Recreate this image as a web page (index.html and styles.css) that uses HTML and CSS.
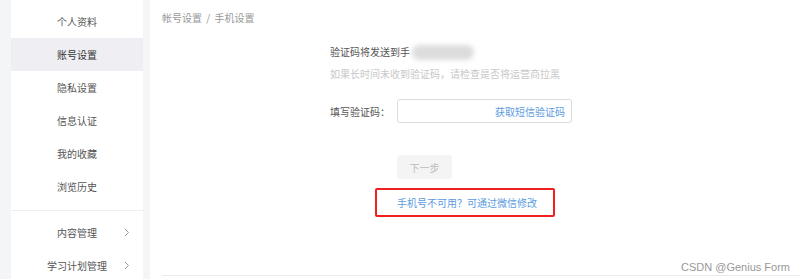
FILE: index.html
```html
<!DOCTYPE html>
<html lang="zh">
<head>
<meta charset="utf-8">
<link rel="stylesheet" href="styles.css">
</head>
<body>
<div class="page">
  <aside class="sidebar">
    <div class="group">
      <div class="item">个人资料</div>
      <div class="item active">账号设置</div>
      <div class="item">隐私设置</div>
      <div class="item">信息认证</div>
      <div class="item">我的收藏</div>
      <div class="item">浏览历史</div>
    </div>
    <div class="group group2">
      <div class="item sub"><span>内容管理</span><svg class="chev" width="6" height="9" viewBox="0 0 6 9"><path d="M1 1 L4.5 4.5 L1 8" fill="none" stroke="#9a9a9a" stroke-width="1"/></svg></div>
      <div class="item sub"><span>学习计划管理</span><svg class="chev" width="6" height="9" viewBox="0 0 6 9"><path d="M1 1 L4.5 4.5 L1 8" fill="none" stroke="#9a9a9a" stroke-width="1"/></svg></div>
    </div>
  </aside>
  <main class="main">
    <div class="crumb">帐号设置 <span class="sep">/</span> 手机设置</div>
    <div class="form">
      <div class="send">验证码将发送到手<span class="blur"></span></div>
      <div class="hint">如果长时间未收到验证码，请检查是否将运营商拉黑</div>
      <div class="row">
        <span class="label">填写验证码：</span>
        <div class="input"><span class="get">获取短信验证码</span></div>
      </div>
      <div class="btn-row"><button class="next">下一步</button></div>
      <div class="alt"><span class="alt-link">手机号不可用？可通过微信修改</span></div>
    </div>
    <div class="bottom"></div>
    <div class="mark">CSDN @Genius Form</div>
  </main>
</div>
</body>
</html>
```

FILE: styles.css
```css
* { box-sizing: border-box; }
html, body {
  margin: 0;
  padding: 0;
  height: 279px;
  overflow: hidden;
  background: #f4f5f7;
  font-family: "Noto Sans CJK SC", "Microsoft YaHei", sans-serif;
  font-size: 10px;
}
.page {
  display: flex;
  padding-left: 11px;
  height: 279px;
}
.sidebar {
  width: 132px;
  background: #fff;
  margin-right: 7px;
  flex: none;
}
.group {
  padding-top: 5px;
  padding-bottom: 7px;
  border-bottom: 1px solid #eeeff1;
}
.group2 {
  padding-top: 5px;
  border-bottom: none;
}
.item {
  height: 33px;
  line-height: 33px;
  text-align: center;
  color: #555;
  font-size: 10px;
}
.item.active { background: #efeff3; color: #333; }
.item.sub {
  display: flex;
  align-items: center;
  justify-content: center;
  position: relative;
}
.chev { position: absolute; right: 13px; top: 12px; }
.main {
  flex: 1;
  background: #fff;
  position: relative;
  padding: 0 0 0 12px;
}
.crumb {
  height: 36px;
  line-height: 36px;
  color: #999;
  font-size: 10px;
}
.crumb .sep { margin: 0 2px; }
.form {
  margin-left: 168px;
}
.send {
  height: 20px;
  line-height: 20px;
  margin-top: 6px;
  color: #555;
  display: flex;
  align-items: center;
}
.blur {
  display: inline-block;
  width: 62px;
  height: 15px;
  background: #dcdcdc;
  border-radius: 8px;
  filter: blur(2.5px);
  margin-left: 2px;
}
.hint {
  margin-top: 2px;
  height: 20px;
  line-height: 20px;
  color: #c8c8c8;
  font-size: 10px;
}
.row {
  display: flex;
  align-items: center;
  margin-top: 15px;
}
.label {
  width: 67px;
  color: #555;
}
.input {
  width: 175px;
  height: 24px;
  border: 1px solid #dcdcdc;
  border-radius: 3px;
  display: flex;
  align-items: center;
  justify-content: flex-end;
  padding-right: 6px;
}
.get { color: #5b9be0; }
.btn-row {
  margin-top: 32px;
  padding-left: 67px;
}
.next {
  width: 55px;
  height: 24px;
  background: #f4f4f4;
  border: none;
  border-radius: 3px;
  color: #bbb;
  font-family: inherit;
  font-size: 10px;
  padding: 0;
  display: block;
}
.alt {
  margin-top: 9px;
  margin-left: 45px;
  width: 180px;
  height: 29px;
  border: 2px solid #f02020;
  border-radius: 2px;
  display: flex;
  align-items: center;
  padding-left: 20px;
}
.alt-link { color: #5b9be0; }
.bottom {
  position: absolute;
  left: 12px;
  right: 0;
  top: 275px;
  border-top: 1px solid #ebebeb;
}
.mark {
  position: absolute;
  right: 10px;
  top: 261px;
  color: #999;
  font-family: "Liberation Sans", Arial, sans-serif;
  font-size: 11px;
}
```
